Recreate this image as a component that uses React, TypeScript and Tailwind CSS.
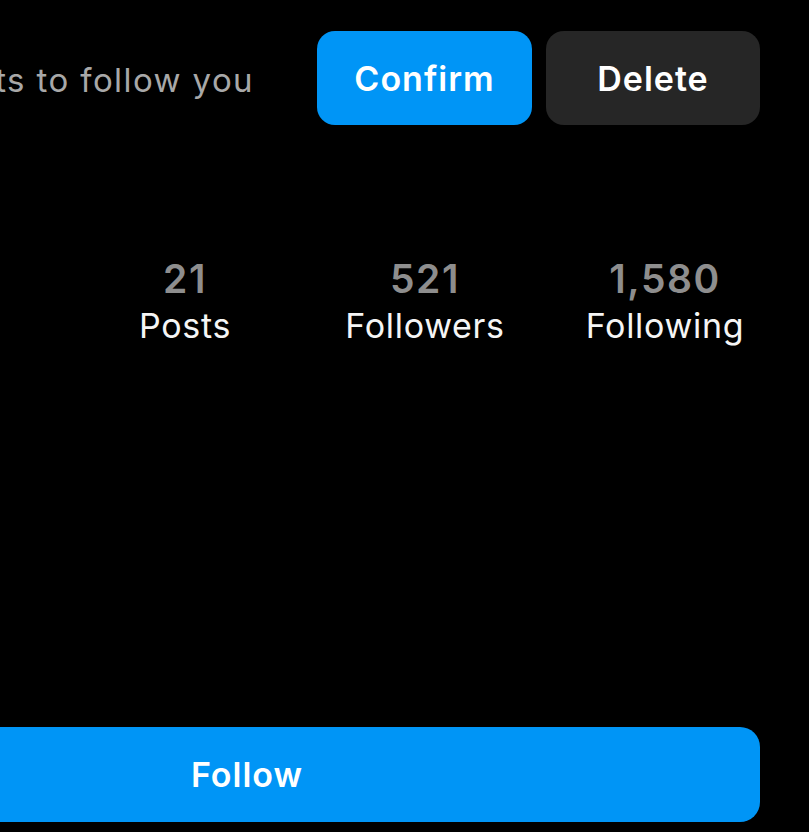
import React from "react";

export default function App() {
  const font = { fontFamily: "Inter, 'Noto Sans', sans-serif" };
  return (
    <div className="w-[809px] h-[832px] bg-black overflow-hidden" style={font}>
      <div className="w-[1075px] -ml-[266px] pr-[49px] flex flex-col">
        <div className="flex items-center h-[94px] mt-[31px]">
          <div className="flex-1 min-w-0 flex justify-end overflow-hidden">
            <span className="whitespace-nowrap text-[33px] leading-[40px] pt-[3px] text-[#a8a8a8] tracking-[1.4px]">
              lalala.page wants to follow you
            </span>
          </div>
          <div className="flex gap-[14px] ml-[63px] shrink-0">
            <button className="w-[215px] h-[94px] rounded-[18px] bg-[#0095f6] text-white text-[34px] tracking-[1px] font-semibold">
              Confirm
            </button>
            <button className="w-[214px] h-[94px] rounded-[18px] bg-[#262626] text-white text-[34px] tracking-[1px] font-semibold">
              Delete
            </button>
          </div>
        </div>
        <div className="flex pl-[331px] mt-[132px]">
          {[
            ["21", "Posts"],
            ["521", "Followers"],
            ["1,580", "Following"],
          ].map(([n, l]) => (
            <div key={l} className="w-[240px] shrink-0 flex flex-col items-center">
              <span className="text-[39px] leading-[44px] font-semibold tracking-[1.5px] text-[#8e8e8e]">{n}</span>
              <span className="text-[34px] leading-[46px] pt-[2px] tracking-[0.7px] text-[#f5f5f5]">{l}</span>
            </div>
          ))}
        </div>
        <button className="mt-[378px] h-[95px] w-full shrink-0 rounded-[20px] bg-[#0095f6] text-white text-[34px] tracking-[1px] font-semibold">
          Follow
        </button>
      </div>
    </div>
  );
}
